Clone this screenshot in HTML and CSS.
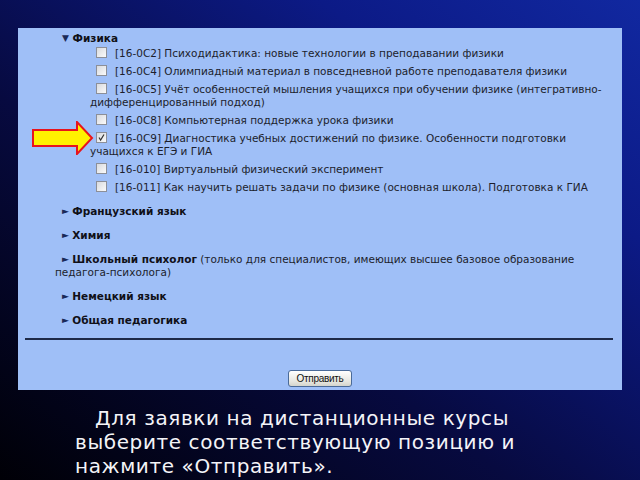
FILE: index.html
```html
<!DOCTYPE html>
<html lang="ru">
<head>
<meta charset="utf-8">
<title>Заявка на дистанционные курсы</title>
<link rel="stylesheet" href="styles.css">
</head>
<body>
<div class="slide">
  <div class="shot">
    <div class="group">
      <div class="head"><span class="tri down">▼</span> Физика</div>
      <div class="item first"><span class="cb"></span>[16-0C2] Психодидактика: новые технологии в преподавании физики</div>
      <div class="item"><span class="cb"></span>[16-0C4] Олимпиадный материал в повседневной работе преподавателя физики</div>
      <div class="item"><span class="cb"></span>[16-0C5] Учёт особенностей мышления учащихся при обучении физике (интегративно-дифференцированный подход)</div>
      <div class="item"><span class="cb"></span>[16-0C8] Компьютерная поддержка урока физики</div>
      <div class="item"><span class="cb checked"><svg viewBox="0 0 11 11" width="11" height="11"><path d="M3 5.5 L4.6 8 L8 2.5" fill="none" stroke="#333" stroke-width="1.2"/></svg></span>[16-0C9] Диагностика учебных достижений по физике. Особенности подготовки учащихся к ЕГЭ и ГИА</div>
      <div class="item"><span class="cb"></span>[16-010] Виртуальный физический эксперимент</div>
      <div class="item"><span class="cb"></span>[16-011] Как научить решать задачи по физике (основная школа). Подготовка к ГИА</div>
    </div>
    <div class="sec"><span class="tri">►</span> <b>Французский язык</b></div>
    <div class="sec"><span class="tri">►</span> <b>Химия</b></div>
    <div class="sec"><span class="tri">►</span> <b>Школьный психолог</b> (только для специалистов, имеющих высшее базовое образование педагога-психолога)</div>
    <div class="sec"><span class="tri">►</span> <b>Немецкий язык</b></div>
    <div class="sec"><span class="tri">►</span> <b>Общая педагогика</b></div>
    <div class="rule"></div>
    <div class="actions"><button class="btn" type="button">Отправить</button></div>
    <svg class="arrow" viewBox="0 0 62 34" width="62" height="34"><path d="M1 9 H45 V1 L60 17 L45 33 V25 H1 Z" fill="#fff200" stroke="#e8141c" stroke-width="2" stroke-linejoin="miter"/></svg>
  </div>
  <p class="note">Для заявки на дистанционные курсы выберите соответствующую позицию и нажмите «Отправить».</p>
</div>
</body>
</html>
```
FILE: styles.css
```css
html, body {
  margin: 0;
  padding: 0;
}
body {
  width: 640px;
  height: 480px;
  overflow: hidden;
}
.slide {
  width: 640px;
  height: 480px;
  box-sizing: border-box;
  padding-top: 28px;
  background: linear-gradient(to top right, #000006 0%, #070a40 40%, #0c1a86 75%, #1128a0 100%);
  font-family: "DejaVu Sans", Verdana, sans-serif;
}
.shot {
  position: relative;
  margin: 0 18px;
  height: 362px;
  box-sizing: border-box;
  padding-top: 4px;
  background: #9fbff7;
  color: #1c1e2c;
  font-size: 10.5px;
  line-height: 13px;
}
.head {
  padding-left: 44px;
  font-weight: bold;
  color: #101018;
}
.tri {
  display: inline-block;
  text-indent: 0;
  font-size: 9px;
  line-height: 13px;
  vertical-align: top;
  color: #1a2a58;
}
.item {
  padding-left: 72px;
  margin-top: 5px;
  padding-right: 8px;
}
.item.first {
  margin-top: 2px;
}
.cb {
  display: inline-block;
  width: 9px;
  height: 9px;
  margin-left: 6px;
  margin-right: 8px;
  border: 1px solid #8c8f98;
  background: linear-gradient(135deg, #d8dade, #fafafa);
  vertical-align: -1px;
  position: relative;
}
.cb svg {
  position: absolute;
  left: -1px;
  top: -1px;
}
.group {
  margin-bottom: 11px;
}
.sec {
  padding-left: 37px;
  text-indent: 7px;
  padding-right: 30px;
  margin-bottom: 11px;
}
.sec b {
  color: #101018;
}
.rule {
  height: 2px;
  background: #1e2a48;
  margin: 0 9px 0 7px;
}
.actions {
  display: flex;
  justify-content: center;
  padding-top: 30px;
}
.btn {
  font-family: "Liberation Sans", Arial, sans-serif;
  font-size: 10px;
  letter-spacing: -0.3px;
  height: 17px;
  padding: 0 4px;
  width: 64px;
  border: 1px solid #4a6a98;
  border-radius: 3px;
  background: linear-gradient(#ffffff, #e6e6e0 70%, #d4d4cc);
  color: #111;
  line-height: 15px;
}
.arrow {
  position: absolute;
  left: 14px;
  top: 93px;
}
.note {
  margin: 16px 0 0 0;
  padding-left: 75px;
  padding-right: 90px;
  text-indent: 20px;
  color: #f4f4f8;
  font-size: 20px;
  line-height: 24px;
  letter-spacing: 0.6px;
}
```
